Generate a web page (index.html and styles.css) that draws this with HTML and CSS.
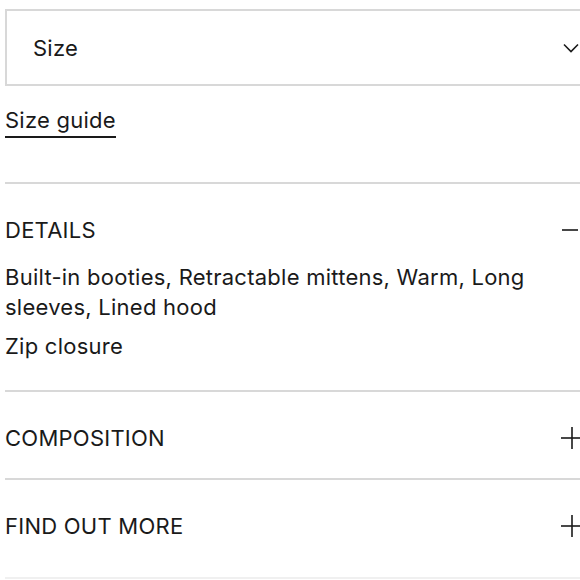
FILE: index.html
```html
<!DOCTYPE html>
<html lang="en">
<head>
<meta charset="utf-8">
<title>Product details</title>
<link rel="stylesheet" href="styles.css">
</head>
<body>
<div class="panel">
  <div class="select">
    <span class="select-label">Size</span>
    <svg class="chevron" width="16" height="10" viewBox="0 0 16 10"><polyline points="1,1.5 8,8.5 15,1.5" fill="none" stroke="#1a1a1a" stroke-width="1.6"/></svg>
  </div>
  <div class="guide-row"><a class="guide" href="#">Size guide</a></div>

  <section class="acc acc-first">
    <div class="acc-head">
      <span class="acc-title">DETAILS</span>
      <svg class="icon-minus" width="16" height="2" viewBox="0 0 16 2"><line x1="0" y1="1" x2="16" y2="1" stroke="#1a1a1a" stroke-width="1.6"/></svg>
    </div>
    <div class="acc-body">
      <p>Built-in booties, Retractable mittens, Warm, Long sleeves, Lined hood</p>
      <p>Zip closure</p>
    </div>
  </section>

  <section class="acc">
    <div class="acc-head">
      <span class="acc-title">COMPOSITION</span>
      <svg class="icon-plus" width="22" height="22" viewBox="0 0 22 22"><line x1="0" y1="11" x2="22" y2="11" stroke="#1a1a1a" stroke-width="1.6"/><line x1="11" y1="0" x2="11" y2="22" stroke="#1a1a1a" stroke-width="1.6"/></svg>
    </div>
  </section>

  <section class="acc acc-last">
    <div class="acc-head">
      <span class="acc-title">FIND OUT MORE</span>
      <svg class="icon-plus" width="22" height="22" viewBox="0 0 22 22"><line x1="0" y1="11" x2="22" y2="11" stroke="#1a1a1a" stroke-width="1.6"/><line x1="11" y1="0" x2="11" y2="22" stroke="#1a1a1a" stroke-width="1.6"/></svg>
    </div>
  </section>
  <div class="acc-end"></div>
</div>
</body>
</html>
```
FILE: styles.css
```css
html, body {
  margin: 0;
  padding: 0;
  overflow: hidden;
  background: #ffffff;
}
body {
  font-family: Inter, "Noto Sans", sans-serif;
  color: #1a1a1a;
  font-size: 22px;
  letter-spacing: 0.25px;
}
.panel {
  width: 577px;
  padding: 9px 0 0 5px;
}
.select {
  box-sizing: border-box;
  height: 77px;
  border: 2px solid #d8d8d8;
  border-right: none;
  display: flex;
  align-items: center;
  justify-content: space-between;
  padding-left: 26px;
  padding-right: 3px;
}
.select-label {
  line-height: 30px;
}
.chevron {
  display: block;
}
.guide-row {
  margin-top: 22px;
  line-height: 24px;
}
.guide {
  display: inline-block;
  color: #1a1a1a;
  text-decoration: none;
  padding-bottom: 4px;
  border-bottom: 2px solid #1a1a1a;
}
.acc-first {
  margin-top: 44px;
}
.acc {
  border-top: 2px solid #d8d8d8;
}
.acc-head {
  display: flex;
  align-items: center;
  justify-content: space-between;
  padding: 31px 0 25px 0;
  line-height: 30px;
}
.acc-last .acc-head {
  padding-bottom: 36px;
}
.icon-minus {
  display: block;
  margin-right: 4px;
}
.icon-plus {
  display: block;
  margin-right: -1px;
}
.acc-body {
  margin-top: -7px;
  padding-bottom: 28px;
}
.acc-body p {
  margin: 0;
  line-height: 29.5px;
}
.acc-body p + p {
  margin-top: 10px;
}
.acc-end {
  border-top: 2px solid #f0f0f0;
}
```
